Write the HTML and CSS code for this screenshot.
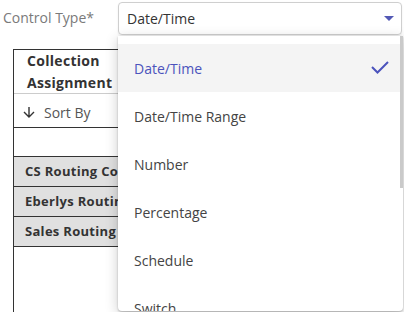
FILE: index.html
```html
<!DOCTYPE html>
<html lang="en">
<head>
    <meta charset="UTF-8">
    <title>Control Type</title>
    <link rel="stylesheet" href="styles.css">
</head>
<body>
    <div class="field">
        <label class="field-label">Control Type*</label>
        <div class="select">
            <span class="select-value">Date/Time</span>
            <svg class="caret" viewBox="0 0 10 5" width="10" height="5">
                <path d="M0 0 L10 0 L5 5 Z"/>
            </svg>

            <div class="menu">
                <ul class="menu-list">
                    <li class="menu-item active">
                        Date/Time
                        <svg class="check" viewBox="0 0 18 13" width="18" height="13">
                            <path d="M1 6 L6.5 11.5 L17 1"/>
                        </svg>
                    </li>
                    <li class="menu-item">Date/Time Range</li>
                    <li class="menu-item">Number</li>
                    <li class="menu-item">Percentage</li>
                    <li class="menu-item">Schedule</li>
                    <li class="menu-item">Switch</li>
                    <li class="menu-item">Text</li>
                </ul>
                <div class="scroll-thumb"></div>
            </div>
        </div>
    </div>

    <div class="grid">
        <div class="grid-head">Collection<br>Assignment</div>
        <div class="grid-sort">
            <svg class="arrow" viewBox="0 0 12 11" width="12" height="11">
                <path d="M6 0 V10 M1 5 L6 10 L11 5"/>
            </svg>
            <span>Sort By</span>
        </div>
        <div class="grid-spacer"></div>
        <div class="grid-row">CS Routing Conditions</div>
        <div class="grid-row">Eberlys Routing Conditions</div>
        <div class="grid-row">Sales Routing Conditions</div>
    </div>
</body>
</html>
```

FILE: styles.css
```css
html, body {
    margin: 0;
    padding: 0;
    background: #fff;
    font-family: "Open Sans", "Liberation Sans", sans-serif;
    overflow: hidden;
}

body {
    width: 404px;
    height: 312px;
}

/* top row: label + select */
.field {
    display: flex;
    align-items: center;
    padding-top: 2px;
}

.field-label {
    width: 115px;
    padding-left: 3px;
    font-size: 14px;
    color: #7a7a7a;
    margin-top: -3px;
}

.select {
    position: relative;
    box-sizing: border-box;
    width: 284px;
    height: 33px;
    border: 1px solid #cfcfcf;
    border-radius: 4px;
    box-shadow: 0 1px 2px rgba(0,0,0,.08);
    display: flex;
    align-items: center;
    justify-content: space-between;
    padding: 0 7px 0 8px;
}

.select-value {
    font-size: 14px;
    color: #333;
}

.caret {
    fill: #5359b5;
    margin-top: -1px;
}

/* opened list, lies over the table */
.menu {
    position: absolute;
    top: 33px;
    left: -1px;
    width: 285px;
    height: 275px;
    background: #fff;
    border-radius: 0 0 4px 4px;
    box-shadow: 0 3px 14px rgba(0,0,0,.2), 0 1px 2px rgba(0,0,0,.25);
    overflow: hidden;
    z-index: 5;
}

.menu-list {
    list-style: none;
    margin: 0;
    padding: 8px 0 0;
}

.menu-item {
    height: 48px;
    display: flex;
    align-items: center;
    justify-content: space-between;
    padding: 0 14px 0 16px;
    font-size: 14px;
    color: #444;
}

.menu-item.active {
    background: #f4f4f4;
    color: #4b53bc;
}

.check {
    fill: none;
    stroke: #4b53bc;
    stroke-width: 2;
    margin-top: -1px;
}

.scroll-thumb {
    position: absolute;
    top: 0;
    right: 0;
    width: 3px;
    height: 152px;
    background: #cacaca;
}

/* table behind */
.grid {
    margin: 14px 0 0 13px;
    width: 320px;
    height: 263px;
    border-left: 1px solid #333;
    border-top: 1px solid #333;
    display: flex;
    flex-direction: column;
}

.grid-head {
    padding-left: 13px;
    font-size: 14px;
    font-weight: 700;
    letter-spacing: .3px;
    line-height: 21.5px;
    color: #333;
    border-bottom: 1px solid #ccc;
}

.grid-sort {
    height: 34px;
    box-sizing: border-box;
    display: flex;
    align-items: center;
    gap: 9px;
    padding: 3px 0 0 9px;
    font-size: 14px;
    color: #555;
    border-bottom: 1px solid #333;
}

.arrow {
    fill: none;
    stroke: #333;
    stroke-width: 1.4;
}

.grid-spacer {
    height: 28px;
    border-bottom: 1px solid #333;
}

.grid-row {
    height: 29px;
    line-height: 29px;
    padding-left: 11px;
    background: #e0e0e0;
    border-bottom: 1px solid #333;
    font-size: 13px;
    font-weight: 700;
    letter-spacing: .3px;
    color: #333;
    white-space: nowrap;
    overflow: hidden;
}
```
